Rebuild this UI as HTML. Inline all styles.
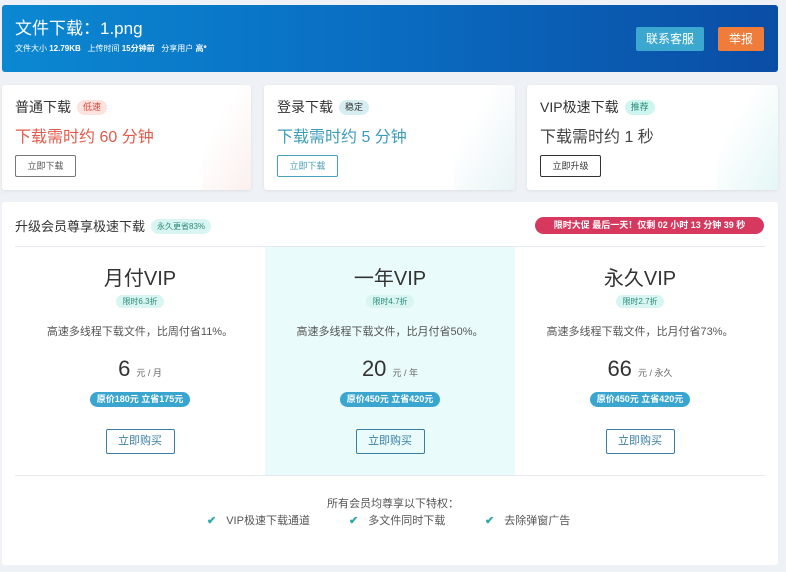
<!DOCTYPE html>
<html><head><meta charset="utf-8"><style>
*{margin:0;padding:0;box-sizing:border-box}
body{width:786px;height:572px;background:#eef1f5;font-family:"Liberation Sans","Noto Sans CJK SC",sans-serif;position:relative;overflow:hidden;color:#333}
.a{position:absolute}
.hdr{left:2px;top:5px;width:776px;height:67px;border-radius:3px;background:linear-gradient(90deg,#0b88d2,#0a6cc0 50%,#0a4da5)}
.btn{position:absolute;color:#fff;font-size:12px;text-align:center;line-height:24px;border-radius:2px}
.card{top:85px;height:105px;background:#fff;border-radius:3px;box-shadow:0 1px 3px rgba(0,0,0,.08);overflow:hidden}
.card .t{position:absolute;left:13px;top:12px;font-size:14px;color:#333}
.tag{display:inline-block;font-size:9px;padding:0 6px;border-radius:8px;line-height:15px;margin-left:6px;vertical-align:2px}
.card .b{position:absolute;left:13px;top:38px;font-size:16px}
.card .k{position:absolute;left:13px;top:70px;width:61px;height:22px;border:1px solid #777;border-radius:2px;font-size:9px;text-align:center;line-height:20px;color:#555}
.col{top:247px;width:250px;height:228px;text-align:center}
.col h3{font-weight:normal;font-size:20px;margin-top:20px;color:#333;line-height:24px}
.lt{display:inline-block;background:#d8f5f1;color:#2a8a78;font-size:8px;padding:0 6px;border-radius:7px;line-height:13px}
.d{font-size:11px;color:#555;margin-top:14px}
.p{margin-top:17px;font-size:22px;color:#333}
.p small{font-size:9px;color:#666}
.pill{display:inline-block;background:#3aa6d0;color:#fff;font-size:9px;font-weight:bold;padding:0 7px;border-radius:8px;line-height:15px;margin-top:10px}
.buy{display:block;margin:22px auto 0;width:69px;height:25px;border:1px solid #3a7fa0;border-radius:2px;font-size:11px;line-height:23px;color:#3a7fa0}
.f{font-size:11px;color:#555}
.ck{color:#2aa8a8;font-weight:bold;margin-right:10px}
</style></head><body>
<div class="a hdr">
<div class="a" style="left:13px;top:9px;color:#fff;font-size:17px">文件下载：1.png</div>
<div class="a" style="left:13px;top:38px;color:#fff;font-size:8px">文件大小 <b>12.79KB</b> &nbsp; 上传时间 <b>15分钟前</b> &nbsp; 分享用户 <b>高*</b></div>
<div class="btn" style="left:634px;top:22px;width:68px;background:#3ca8d0">联系客服</div>
<div class="btn" style="left:716px;top:22px;width:46px;background:#f07c3c">举报</div>
</div>
<div class="a card" style="left:2px;width:249px">
<div class="a" style="left:200px;top:0;width:60px;height:105px;background:linear-gradient(120deg,#fff 30%,#fbeeea)"></div>
<div class="t">普通下载<span class="tag" style="background:#fde3de;color:#d9463a">低速</span></div>
<div class="b" style="color:#e25a4a">下载需时约 60 分钟</div>
<div class="k">立即下载</div></div>
<div class="a card" style="left:264px;width:251px">
<div class="a" style="left:190px;top:0;width:61px;height:105px;background:linear-gradient(120deg,#fff 30%,#e8f4f6)"></div>
<div class="t">登录下载<span class="tag" style="background:#d6eef2;color:#333">稳定</span></div>
<div class="b" style="color:#3d9cba">下载需时约 5 分钟</div>
<div class="k" style="border-color:#4a9fb8;color:#4a9fb8">立即下载</div></div>
<div class="a card" style="left:527px;width:251px">
<div class="a" style="left:190px;top:0;width:61px;height:105px;background:linear-gradient(120deg,#fff 30%,#e4f6f6)"></div>
<div class="t">VIP极速下载<span class="tag" style="background:#cff5f0;color:#2a8a78">推荐</span></div>
<div class="b" style="color:#444">下载需时约 1 秒</div>
<div class="k" style="border-color:#333;color:#333">立即升级</div></div>
<div class="a" style="left:2px;top:202px;width:776px;height:363px;background:#fff;border-radius:3px"></div>
<div class="a" style="left:15px;top:216px;font-size:13px">升级会员尊享极速下载<span class="tag" style="background:#d8f5f1;color:#2a8a78;font-size:8px">永久更省83%</span></div>
<div class="a" style="left:535px;top:217px;width:229px;height:17px;background:#d7385e;border-radius:9px;color:#fff;font-size:9px;font-weight:bold;text-align:center;line-height:17px">限时大促 最后一天！仅剩 02 小时 13 分钟 39 秒</div>
<div class="a" style="left:15px;top:246px;width:750px;height:1px;background:#e6e9ee"></div>
<div class="a col" style="left:15px"><h3>月付VIP</h3><span class="lt">限时6.3折</span><div class="d">高速多线程下载文件，比周付省11%。</div><div class="p">6 <small>元 / 月</small></div><span class="pill">原价180元 立省175元</span><span class="buy">立即购买</span></div>
<div class="a col" style="left:265px;background:#e9fbfb"><h3>一年VIP</h3><span class="lt">限时4.7折</span><div class="d">高速多线程下载文件，比月付省50%。</div><div class="p">20 <small>元 / 年</small></div><span class="pill">原价450元 立省420元</span><span class="buy">立即购买</span></div>
<div class="a col" style="left:515px"><h3>永久VIP</h3><span class="lt">限时2.7折</span><div class="d">高速多线程下载文件，比月付省73%。</div><div class="p">66 <small>元 / 永久</small></div><span class="pill">原价450元 立省420元</span><span class="buy">立即购买</span></div>
<div class="a" style="left:15px;top:475px;width:750px;height:1px;background:#e6e9ee"></div>
<div class="a f" style="left:0;width:786px;top:495px;text-align:center">所有会员均尊享以下特权：</div>
<div class="a f" style="left:207px;top:512px"><span class="ck">✔</span>VIP极速下载通道</div>
<div class="a f" style="left:349px;top:512px"><span class="ck">✔</span>多文件同时下载</div>
<div class="a f" style="left:485px;top:512px"><span class="ck">✔</span>去除弹窗广告</div>
</body></html>
